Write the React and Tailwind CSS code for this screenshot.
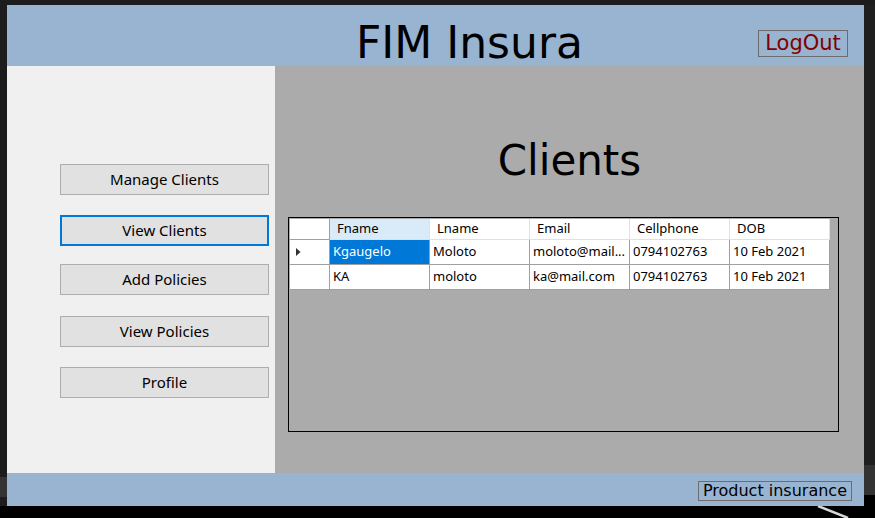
import { useState } from "react";

const rows = [
  { fname: "Kgaugelo", lname: "Moloto", email: "moloto@mail...", cell: "0794102763", dob: "10 Feb 2021" },
  { fname: "KA", lname: "moloto", email: "ka@mail.com", cell: "0794102763", dob: "10 Feb 2021" },
];

const cols = ["Fname", "Lname", "Email", "Cellphone", "DOB"];

function SideButton({ label, active, className }) {
  return (
    <button
      className={
        "w-[209px] h-[31px] bg-[#e1e1e1] text-[15px] text-black " +
        (active ? "border-2 border-[#0078d7] " : "border border-[#adadad] ") +
        className
      }
    >
      {label}
    </button>
  );
}

export default function App() {
  const [selected] = useState(0);

  return (
    <div className="w-[875px] h-[518px] bg-black flex flex-col overflow-hidden" style={{ fontFamily: "'Noto Sans', sans-serif" }}>
      <div className="h-[5px] bg-[#1c1c1c] shrink-0" />
      <div className="flex h-[501px] shrink-0">
        <div className="w-[7px] flex flex-col">
          <div className="h-[472px] bg-[#1c1c1c]" />
          <div className="h-[20px] bg-[#333333]" />
          <div className="flex-1 bg-[#1c1c1c]" />
        </div>

        {/* window */}
        <div className="w-[857px] flex flex-col">

          {/* header */}
          <div className="h-[61px] bg-[#99b4d1] flex items-start shrink-0">
            <div className="ml-[349px] mt-[16px] text-[44px] leading-none text-black" style={{ fontFamily: "'DejaVu Sans', sans-serif" }}>
              FIM Insura
            </div>
            <div className="ml-auto mr-[16px] mt-[25px] h-[27px] w-[90px] border border-[#6d6d6d] flex items-center justify-center text-[21px] text-[#800000]" style={{ fontFamily: "'DejaVu Sans', sans-serif" }}>
              LogOut
            </div>
          </div>

          <div className="flex flex-1 min-h-0">

            {/* sidebar */}
            <div className="w-[268px] bg-[#f0f0f0] flex flex-col pl-[53px] pt-[98px]">
              <SideButton label="Manage Clients" />
              <SideButton label="View Clients" active className="mt-[20px]" />
              <SideButton label="Add Policies" className="mt-[18px]" />
              <SideButton label="View Policies" className="mt-[21px]" />
              <SideButton label="Profile" className="mt-[20px]" />
            </div>

            {/* content */}
            <div className="flex-1 bg-[#ababab] flex flex-col">
              <div className="h-[151px] flex items-center justify-center pt-[38px] text-[42px] text-black" style={{ fontFamily: "'DejaVu Sans', sans-serif" }}>
                Clients
              </div>
              <div className="ml-[13px] w-[551px] h-[215px] border border-black pl-px pt-px">
                <div className="flex h-[21px] text-[13px] text-black">
                  <div className="w-[40px] bg-white border-r border-b border-[#a0a0a0]" />
                  {cols.map((c, i) => (
                    <div
                      key={c}
                      className={
                        "w-[100px] px-[7px] flex items-center border-r border-b border-[#e0e0e0] " +
                        (i === 0 ? "bg-[#d9ebf9]" : "bg-white")
                      }
                    >
                      {c}
                    </div>
                  ))}
                </div>
                {rows.map((r, ri) => (
                  <div key={ri} className="flex h-[25px] text-[13px] text-black">
                    <div className="w-[40px] bg-white border-r border-b border-[#a0a0a0] flex items-center pl-[6px]">
                      {ri === selected && (
                        <svg width="5" height="8" viewBox="0 0 5 8">
                          <path d="M0 0 L4.5 4 L0 8 Z" fill="#333" />
                        </svg>
                      )}
                    </div>
                    {[r.fname, r.lname, r.email, r.cell, r.dob].map((v, ci) => (
                      <div
                        key={ci}
                        className={
                          "w-[100px] px-[3px] flex items-center border-r border-b border-[#a0a0a0] whitespace-nowrap overflow-hidden " +
                          (ri === selected && ci === 0 ? "bg-[#0078d7] text-white" : "bg-white")
                        }
                      >
                        {v}
                      </div>
                    ))}
                  </div>
                ))}
              </div>
            </div>
          </div>

          {/* footer */}
          <div className="h-[33px] bg-[#99b4d1] flex items-start justify-end pr-[12px] shrink-0">
            <div className="mt-[8px] h-[20px] px-[4px] border border-[#6d6d6d] flex items-center text-[16px] text-black" style={{ fontFamily: "'DejaVu Sans', sans-serif" }}>
              Product insurance
            </div>
          </div>
        </div>

        <div className="flex-1 flex flex-col">
          <div className="h-[460px] bg-[#1f1f1f]" />
          <div className="h-[30px] bg-[#333333]" />
          <div className="flex-1 bg-black" />
        </div>
      </div>

      <div className="flex-1 relative">
        <svg className="absolute left-[810px] top-0" width="45" height="12" viewBox="0 0 45 12">
          <path d="M8 0 L38 12" stroke="#d8d8d8" strokeWidth="2.5" />
        </svg>
      </div>
    </div>
  );
}
